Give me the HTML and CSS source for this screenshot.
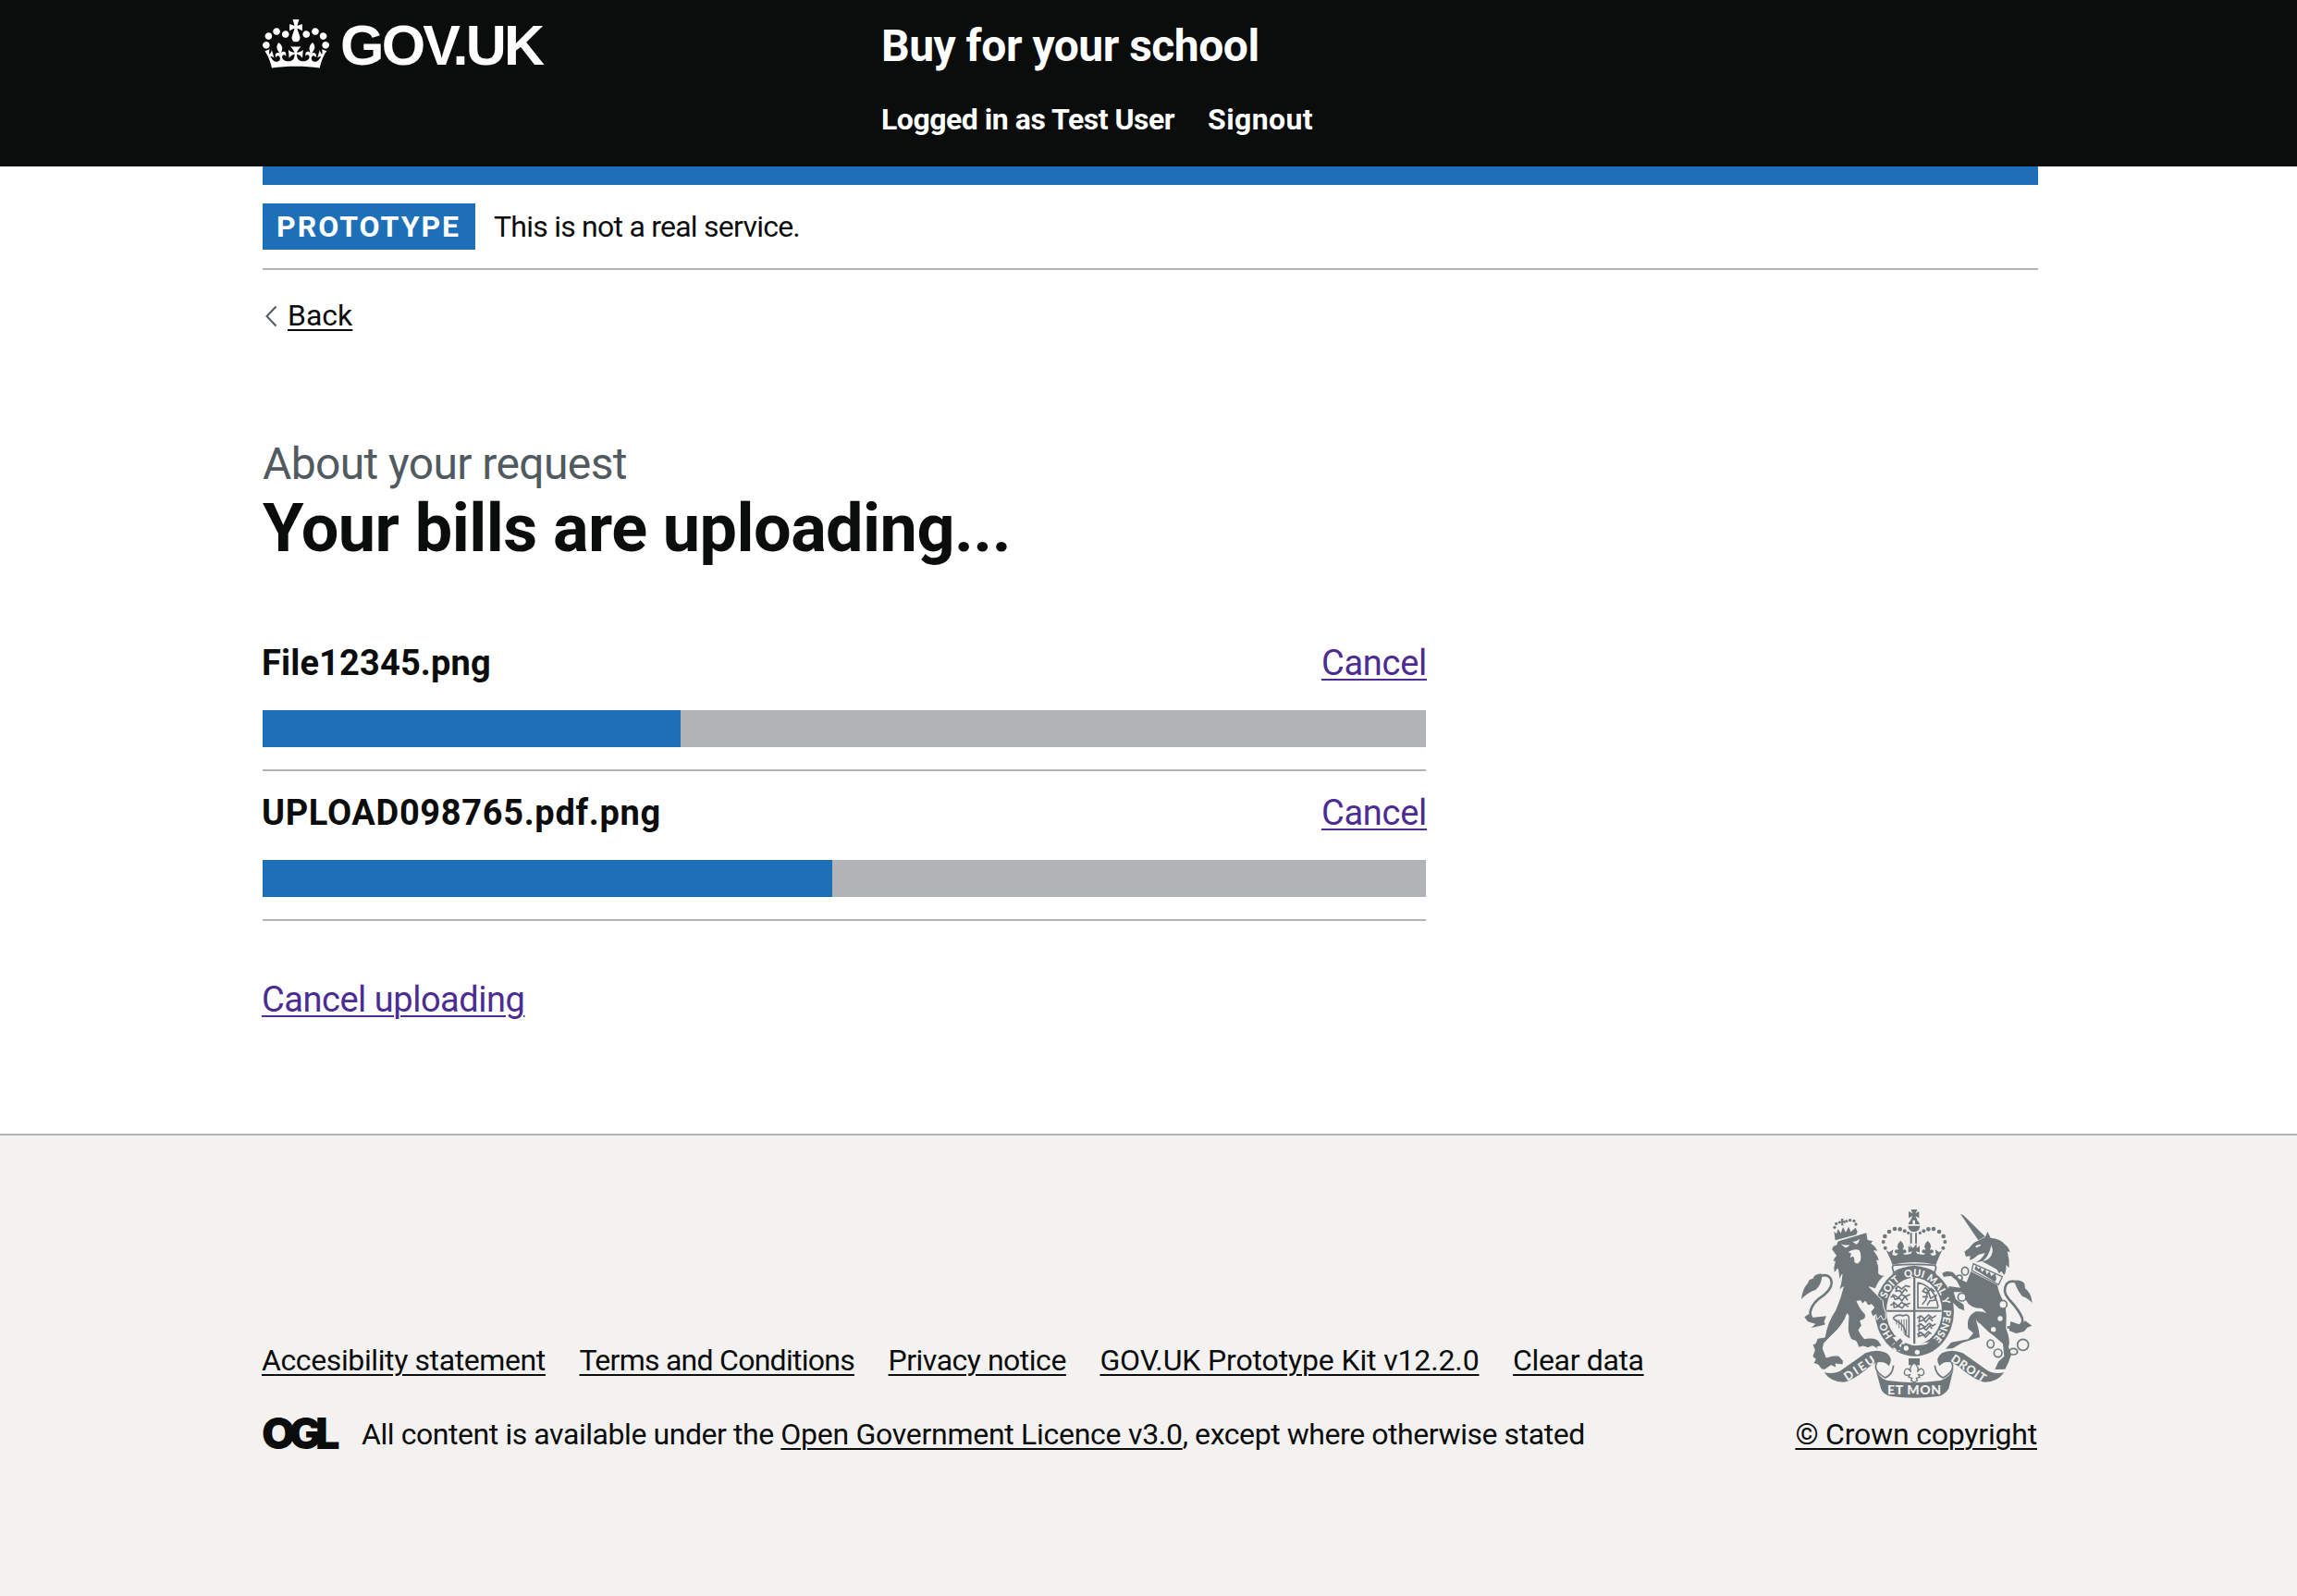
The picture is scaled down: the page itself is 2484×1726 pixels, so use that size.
FILE: index.html
```html
<!DOCTYPE html>
<html lang="en">
<head>
<meta charset="utf-8">
<title>Your bills are uploading – Buy for your school</title>
<link rel="stylesheet" href="styles.css">
</head>
<body>
<header class="header">
  <div class="container header-inner">
    <div class="logo">
      <svg class="crown" viewBox="0 0 132 97" aria-hidden="true"><path fill="currentColor" d="M25 30.2c3.5 1.5 7.7-.2 9.1-3.7 1.5-3.6-.2-7.8-3.9-9.2-3.6-1.4-7.6.3-9.1 3.9-1.4 3.5.3 7.5 3.9 9zM9 39.5c3.6 1.5 7.8-.2 9.2-3.7 1.5-3.6-.2-7.8-3.9-9.1-3.6-1.5-7.6.2-9.1 3.8-1.4 3.5.3 7.5 3.8 9zM4.4 57.2c3.5 1.5 7.7-.2 9.1-3.8 1.5-3.6-.2-7.7-3.9-9.1-3.5-1.5-7.6.3-9.1 3.8-1.4 3.5.3 7.6 3.9 9.1zm38.3-21.4c3.5 1.5 7.7-.2 9.1-3.8 1.5-3.6-.2-7.7-3.9-9.1-3.6-1.5-7.6.3-9.1 3.8-1.3 3.6.4 7.7 3.9 9.1zm64.4-5.6c-3.6 1.5-7.8-.2-9.1-3.7-1.5-3.6.2-7.8 3.8-9.2 3.6-1.4 7.7.3 9.2 3.9 1.3 3.5-.4 7.5-3.9 9zm15.9 9.3c-3.6 1.5-7.7-.2-9.1-3.7-1.5-3.6.2-7.8 3.7-9.1 3.6-1.5 7.7.2 9.2 3.8 1.5 3.5-.3 7.5-3.8 9zm4.7 17.7c-3.6 1.5-7.8-.2-9.2-3.8-1.5-3.6.2-7.7 3.9-9.1 3.6-1.5 7.7.3 9.2 3.8 1.3 3.5-.4 7.6-3.9 9.1zM89.3 35.8c-3.6 1.5-7.8-.2-9.2-3.8-1.4-3.6.2-7.7 3.9-9.1 3.6-1.5 7.7.3 9.2 3.8 1.4 3.6-.3 7.7-3.9 9.1zM69.7 17.7l8.9 4.7V9.3l-8.9 2.8c-.2-.3-.5-.6-.9-.9L72.4 0H59.6l3.5 11.2c-.3.3-.6.5-.9.9l-8.8-2.8v13.1l8.8-4.7c.3.3.6.7.9.9l-5 15.4v.1c-.2.8-.4 1.6-.4 2.4 0 4.1 3.1 7.5 7 8.1h.2c.3 0 .7.1 1 .1.4 0 .7 0 1-.1h.2c4-.6 7.1-4.1 7.1-8.1 0-.8-.1-1.7-.4-2.4V34l-5.1-15.4c.4-.2.7-.6 1-.9zM66 92.8c16.9 0 32.8 1.1 47.1 3.2 4-16.9 8.9-26.7 14-33.5l-9.6-3.4c1 4.9 1.1 7.2 0 10.2-1.5-1.4-3-4.3-4.2-8.7L108.6 76c2.8-2 5-3.2 7.5-3.3-4.4 9.4-10 11.9-13.6 11.2-4.3-.8-6.3-4.6-5.6-7.9 1-4.7 5.7-5.9 8-.5 4.3-8.7-3-11.4-7.6-8.8 7.1-7.2 7.9-13.5 2.1-21.1-8 6.1-8.1 12.3-4.5 20.8-4.7-5.4-12.1-2.5-9.5 6.2 3.4-5.2 7.9-2 7.2 3.1-.6 4.3-6.4 7.8-13.5 7.2-10.3-.9-10.9-8-11.2-13.8 2.5-.5 7.1 1.8 11 7.3L80.2 60c-4.1 4.4-8 5.3-12.3 5.4 1.4-4.4 8-11.6 8-11.6H55.5s6.4 7.2 7.9 11.6c-4.2-.1-8-1-12.3-5.4l1.4 16.4c3.9-5.5 8.5-7.7 10.9-7.3-.3 5.8-.9 12.8-11.1 13.8-7.2.6-12.9-2.9-13.5-7.2-.7-5 3.8-8.3 7.1-3.1 2.7-8.7-4.6-11.6-9.4-6.2 3.7-8.5 3.6-14.7-4.6-20.8-5.8 7.6-5 13.9 2.2 21.1-4.7-2.6-11.9.1-7.7 8.8 2.3-5.5 7.1-4.2 8.1.5.7 3.3-1.3 7.1-5.7 7.9-3.5.7-9-1.8-13.5-11.2 2.5.1 4.7 1.3 7.5 3.3l-4.7-15.4c-1.2 4.4-2.7 7.2-4.3 8.7-1.1-3-.9-5.3 0-10.2l-9.5 3.4c5 6.9 9.9 16.7 14 33.5 14.8-2.1 30.8-3.2 47.7-3.2z"/></svg>
      <span class="logo-text">GOV.UK</span>
    </div>
    <div class="header-content">
      <div class="service-name">Buy for your school</div>
      <nav class="header-nav"><span class="nav-user">Logged in as Test User</span><span class="nav-out">Signout</span></nav>
    </div>
  </div>
</header>
<div class="container">
  <div class="phase-banner"><strong class="tag">PROTOTYPE</strong><span class="phase-text">This is not a real service.</span></div>
  <div class="back"><svg class="chevron" viewBox="0 0 14 24" aria-hidden="true"><path d="M12.500 1.500 2.500 12l10 10.500" fill="none" stroke="#505a5f" stroke-width="2"/></svg><a>Back</a></div>
  <main class="main">
    <div class="caption">About your request</div>
    <h1 class="title">Your bills are uploading...</h1>
    <section class="upload">
      <div class="upload-head"><strong class="file-image">File12345.png</strong><a class="cancel">Cancel</a></div>
      <div class="bar"><div class="bar-fill" style="width:452px"></div></div>
    </section>
    <section class="upload">
      <div class="upload-head"><strong class="file-doc">UPLOAD098765.pdf.png</strong><a class="cancel">Cancel</a></div>
      <div class="bar"><div class="bar-fill" style="width:616px"></div></div>
    </section>
    <div class="cancel-all"><a>Cancel uploading</a></div>
  </main>
</div>
<footer class="footer">
  <div class="container footer-inner">
    <div class="footer-main">
      <nav class="footer-links"><a class="link-access">Accesibility statement</a><a class="link-terms">Terms and Conditions</a><a class="link-privacy">Privacy notice</a><a class="link-kit">GOV.UK Prototype Kit v12.2.0</a><a class="link-clear">Clear data</a></nav>
      <div class="licence"><span class="ogl">OGL</span><span class="licence-text">All content is available under the <a>Open Government Licence v3.0</a>, except where otherwise stated</span></div>
    </div>
    <div class="footer-side">
      <svg class="crest" viewBox="54 54 750 612" aria-hidden="true">
        <defs>
          <path id="ring" d="M420 499A96 114 0 0 1 420 271A96 114 0 0 1 420 499"/>
          <g id="half">
            <path d="M128 583Q165 590 188 572L262 520Q300 505 330 520Q354 537 338 562Q325 545 300 550Q285 555 262 575Q215 612 190 614Q150 614 128 583Z"/>
            <path d="M300 548Q283 576 326 600Q350 590 353 560" fill="none" stroke="currentColor" stroke-width="5"/>
            <g><circle cx="326" cy="179" r="6"/><circle cx="320" cy="159" r="6"/><circle cx="325" cy="141" r="7"/><circle cx="339" cy="126" r="7"/><circle cx="357" cy="117" r="7"/><circle cx="374" cy="118" r="7"/><circle cx="389" cy="124" r="6"/><circle cx="401" cy="130" r="5"/></g>
            <path d="M329 186l10 7 13-9-3 17 12 4 8-9q-12 2-12-7 2-8 12-4-1-6-4-10 1-11 11-20 10 9 11 20-3 4-4 10 10-4 12 4 0 9-12 7l8 8 16-6 13 4v10q-40-2-75 8Z"/>
            <path d="M341 208q38-9 79-9v26q-36 0-71 8Z"/>
            <path d="M420 232q-35 0-67 3c-10 7 2 17 0 24q24-16 67-20" fill="none" stroke="currentColor" stroke-width="5"/>
          </g>
        </defs>
        <use href="#half"/><use href="#half" transform="matrix(-1 0 0 1 840 0)"/>
        <path d="M409 54h22l-7 13 12-7v22l-12-7 7 14h-23l7-14-13 7V60l13 7ZM401 102a18 18 0 0 1 14-14v14Zm22-14a18 18 0 0 1 15 14h-15ZM400 107h39q0 18-20 20-18-2-19-20ZM407 130h6v34h-6Zm16 0h6v34h-6ZM404 165l12 14 12-14v14l10-7v22l-12-5 5 12h-23l5-12-12 5v-22l10 7Z"/>
        <!-- garter and quartered shield -->
        <ellipse cx="421" cy="385" rx="128" ry="145"/>
        <ellipse class="paper" cx="420" cy="384" rx="90" ry="109"/>
        <path d="M417 276h7v214h-7ZM331 380h178v6H331Z"/>
        <g fill="none" stroke="currentColor" stroke-width="5">
          <path d="M358 311l10-7 12 8 12-11 15 4M365 302l-4 17 13-2 6 9 10-14 8 8M344 339l12-7 12 9 10-11 14 6 15-6M350 329l8 17 14-4 8 8 11-14 8 13M343 365l13-8 11 10 13-12 11 9 16-6M353 353l2 19 16-4 10 6 10-13 10 9"/>
          <path d="M432 290V373h66M432 291q55 12 66 80M446 362l12-15 4-21-14-7 8-11 9 9 8 25 18-9-4 15-17 3-8 14M460 324l15-13 12 10M447 337l18 1"/>
          <path d="M430 406l12-7 11 10 14-13 12 10 12-8M438 398l-2 20 15-6 7 7 11-14 11 11M430 433l13-7 12 10 14-13 11 9 10-7M438 423l-3 21 15-6 9 7 12-14 7 10M430 460l12-7 12 9 12-12 10 8M437 449l-3 17 16-5 7 7 12-12"/>
          <path d="M353 405q13-14 30-6 19-8 20 7v62l-12-8q4-30-36-49Z"/>
          <path d="M363 410v18M371 411v28M379 411v37M387 410v45M395 410v49" stroke-width="3"/>
        </g>
        <path class="paper" d="M350 468l35-2-2 14 36 12 50-8-10 8-45 5-34-7-6 24-18-1-9-18 12-13Z"/>
        <path d="M353 473l9 10 13-11 8 10-12 14 11 10-17 8-7-11-11-2 3-8 7-4Z"/>
        <path d="M391 487q36 16 70 8l22 18q-55 25-110 0Z"/>
        <circle class="paper" cx="394" cy="504" r="8"/><circle class="paper" cx="430" cy="517" r="8"/>
        <g class="motto">
          <text><textPath href="#ring" startOffset="16%">HO</textPath></text>
          <text><textPath href="#ring" startOffset="37%">SOIT</textPath></text>
          <text><textPath href="#ring" startOffset="50%">QUI</textPath></text>
          <text><textPath href="#ring" startOffset="61.500%">MAL</textPath></text>
          <text><textPath href="#ring" startOffset="70%">Y</textPath></text>
          <text><textPath href="#ring" startOffset="82%">PENSE</textPath></text>
        </g>
        <!-- lion -->
        <path class="cut" d="M152 183Q154 170 168 168L172 156Q220 142 266 128L270 152L288 155L281 164Q296 172 303 190L290 188Q304 204 308 222L299 219Q308 240 305 262Q310 268 325 268Q302 286 295 312L274 305L318 350L321 372Q330 385 328 408L319 412L312 398L300 412L296 395L285 402L279 386L290 372L282 362L270 366L262 352L252 360L246 350L234 352Q246 380 262 395Q266 410 245 415L250 430L240 445Q246 460 258 473Q290 466 305 480L316 497L300 500L308 510L285 497L270 503L255 498L240 502L232 482L215 475Q203 450 205 435L207 400L203 392Q190 430 150 465L128 488L124 505L135 534Q155 526 175 528L190 545L189 558L165 555L168 568L150 560L130 574L120 573L108 558L93 553L100 540L90 530L97 510L90 492L100 488L106 472L130 468Q137 420 165 380L180 340L190 305L176 316Q184 292 186 265L176 283Q176 262 172 246L160 262Q156 240 163 222L156 224Q158 210 167 204Z"/>
        <path class="paper" d="M182 166q14 6 29 2-6 10-15 10Zm38-8q14 0 23-9-3 15-11 18ZM206 192q18-13 36-6 8 16 4 34-10 16-20 4 2-12-4-18l-10 4 4-13Z"/>
        <path d="M160 125l8 8 5-16 9 14 7-20 9 17 10-18 6 17 16-14 6 13-4 10-68 18Z"/><path d="M182 84h9l-2 7 8-2v10l-8-2 2 9h-8l1-9-7 3v-9l7 2Z"/>
        <circle cx="162" cy="112" r="5"/><circle cx="167" cy="100" r="5"/><circle cx="177" cy="96" r="4"/><circle cx="201" cy="92" r="4"/><circle cx="212" cy="89" r="5"/><circle cx="225" cy="91" r="5"/><circle cx="231" cy="102" r="5"/>
        <path d="M130 425Q80 420 83 385Q90 355 127 332Q160 305 150 280Q140 262 115 270" fill="none" stroke="currentColor" stroke-width="8"/>
        <path d="M118 262Q95 265 92 278L80 282L75 293Q58 310 54 345Q75 323 100 315Q118 300 121 272ZM64 403L78 393L87 405L135 400L123 430L86 438L100 425L75 418Z"/>
        <!-- unicorn -->
        <path d="M570 68L580 73L650 142L628 154ZM626 156L650 144L654 136L658 126L668 146Q700 148 715 168Q728 178 731 193L722 190Q730 216 728 243L718 234Q720 256 712 266L702 254L696 262L688 248L640 222L620 226Q640 216 650 196Q630 198 622 206L612 214L600 218L602 205L588 207L583 191L600 178Q612 160 626 156Z"/>
        <path class="paper" d="M618 174q8-8 20-5-8 8-16 9ZM670 170q12 24-8 44 -10 8-20 8 22-18 28-52Z"/>
        <path d="M604 255L690 299Q695 330 715 360Q722 400 718 440Q734 480 726 500L735 525L726 550L715 572L682 573L693 548L712 530L708 490L680 465L660 450L635 425Q625 420 620 410Q630 440 633 468L575 487L545 505L522 506L540 485L595 475L612 455L595 440Q588 400 620 385Q640 383 655 390L640 375Q600 375 588 348L575 322L548 322L555 345L580 362L583 382L565 375L535 345L527 325L533 303L570 308L558 285L540 270L515 272L511 260L526 254L545 257L567 280L590 290Z"/>
        <path class="paper" d="M612 230L706 272L694 298L607 252Z" stroke="currentColor" stroke-width="4"/>
        <path d="M616 248l4-13 8 12 8-5 3 15 12-10 4 18 9-10 6 15 13-9 4 18-5 10Z"/>
        <path d="M722 436Q780 440 770 405Q760 380 727 345Q705 320 720 295Q735 280 758 292" fill="none" stroke="currentColor" stroke-width="8"/>
        <path d="M745 285Q765 280 778 295L780 310Q800 325 803 357Q790 342 770 335Q750 310 745 285ZM733 417L765 428L780 415L802 431L787 437L776 450L751 456L728 447Z"/>
        <g fill="none" stroke="currentColor" stroke-width="5"><ellipse cx="585" cy="254" rx="11" ry="13"/><circle cx="567" cy="276" r="9"/><circle class="link" cx="575" cy="338" r="13"/><circle cx="708" cy="362" r="13" class="link"/><ellipse cx="668" cy="490" rx="11" ry="13"/><circle cx="692" cy="520" r="13"/><ellipse cx="742" cy="515" rx="13" ry="10"/><circle cx="773" cy="493" r="18"/></g>
        <circle class="paper" cx="699" cy="408" r="8"/><circle class="paper" cx="677" cy="443" r="8"/>
        <!-- lower ribbon -->
        <path d="M296 575Q310 604 335 609Q420 622 505 609Q534 600 548 570L532 635Q520 655 498 660Q420 671 345 660Q320 655 312 635Z"/>
        <path d="M402 537h36v22h-36Z"/>
        <path class="paper" d="M420 551q-20 18-10 30-12-18-20-5-6 12 6 17l10-3-4 8 11 3-3 8 10 6 10-6-3-8 11-3-4-8 10 3q12-5 6-17-8-13-20 5 10-12-10-30Z" stroke="currentColor" stroke-width="4"/>
        <g class="motto ribbon"><text x="420" y="655" textLength="174">ET MON</text><text class="ribbon-side" transform="translate(250 580) rotate(-34)" textLength="112">DIEU</text><text class="ribbon-side" transform="translate(589 580) rotate(34)" textLength="128">DROIT</text></g>
      </svg>
      <a class="copyright">© Crown copyright</a>
    </div>
  </div>
</footer>
</body>
</html>
```
FILE: styles.css
```css
* { box-sizing: border-box; }
body {
  margin: 0;
  font-family: Roboto, "Noto Sans", sans-serif;
  font-size: 32px;
  line-height: 40px;
  color: #0b0c0c;
  background: #fff;
  height: 1726px;
  display: flex;
  flex-direction: column;
  white-space: nowrap;
}
a { text-decoration: underline; text-decoration-thickness: 2px; text-underline-offset: 4px; }
.container { width: 1920px; margin-left: 284px; }
.header { height: 180px; background: #0b0c0c; color: #fff; }
.header-inner { display: flex; }
.logo { width: 669px; padding-top: 21px; display: flex; gap: 12px; }
.crown { width: 72px; height: 53px; }
.logo-text { font: bold 61px/56px "Liberation Sans", sans-serif; letter-spacing: -2.8px; }
.header-content { padding-top: 20px; font-weight: bold; }
.service-name { font-size: 48px; line-height: 60px; letter-spacing: -0.5px; }
.header-nav { margin-top: 29px; display: flex; gap: 36px; }
.nav-user { letter-spacing: -0.48px; }
.nav-out { letter-spacing: 0.4px; }
.phase-banner { border-top: 20px solid #1d70b8; border-bottom: 2px solid #b1b4b6; padding: 20px 0; height: 112px; display: flex; gap: 20px; line-height: 50px; }
.tag { background: #1d70b8; color: #fff; width: 230px; height: 50px; padding-left: 15px; letter-spacing: 2px; }
.phase-text { letter-spacing: -0.76px; }
.back { display: flex; align-items: center; margin-top: 29px; height: 40px; }
.chevron { width: 14px; height: 24px; margin: 2px 11px 0 2px; }
.main { width: 1258px; padding-top: 111px; }
.caption { font-size: 48px; line-height: 60px; color: #505a5f; letter-spacing: -0.62px; }
.title { margin: 0 0 80px; font-size: 72px; line-height: 80px; font-weight: bold; letter-spacing: -0.55px; }
.upload { border-bottom: 2px solid #b1b4b6; padding-bottom: 24px; margin-bottom: 20px; font-size: 38px; line-height: 50px; }
.upload-head { display: flex; justify-content: space-between; }
.file-image { letter-spacing: 0.15px; margin-left: -1px; }
.file-doc { letter-spacing: 0.66px; margin-left: -1px; }
.bar { margin-top: 26px; height: 40px; background: #b1b4b6; }
.bar-fill { height: 40px; background: #1d70b8; }
.cancel { color: #4c2c92; letter-spacing: -0.28px; margin-right: -1px; }
.cancel-all { margin: 60px 0 0 -1px; font-size: 38px; line-height: 50px; color: #4c2c92; letter-spacing: -0.47px; }
.footer { margin-top: 120px; flex: 1; background: #f3f2f1; border-top: 2px solid #b1b4b6; padding-top: 80px; }
.footer-inner { display: flex; justify-content: space-between; align-items: flex-end; }
.footer-links { display: flex; gap: 36.6px; margin: 0 0 40px -1px; }
.link-access { letter-spacing: -0.39px; }
.link-terms { letter-spacing: -0.74px; }
.link-privacy { letter-spacing: -0.49px; }
.link-kit { letter-spacing: -0.14px; }
.link-clear { letter-spacing: -0.36px; }
.licence { display: flex; gap: 25px; }
.licence-text { letter-spacing: -0.43px; }
.licence-text a { letter-spacing: -0.28px; }
.ogl { width: 82px; font: 900 47px/38px Inter, sans-serif; letter-spacing: -7px; text-indent: -1px; }
.footer-side { display: flex; flex-direction: column; align-items: flex-end; gap: 19px; }
.crest { width: 250px; height: 204px; margin-right: 6px; color: #6f777b; fill: #6f777b; }
.paper { fill: #f3f2f1; }
.cut { stroke: #f3f2f1; stroke-width: 3px; }
.link { fill: #f3f2f1; }
.motto { fill: #f3f2f1; font-family: Lato, sans-serif; font-weight: 900; font-size: 33px; text-anchor: middle; }
.ribbon { font-size: 42px; }
.ribbon-side { font-size: 38px; }
.copyright { letter-spacing: -0.2px; margin-right: 1px; }
```
